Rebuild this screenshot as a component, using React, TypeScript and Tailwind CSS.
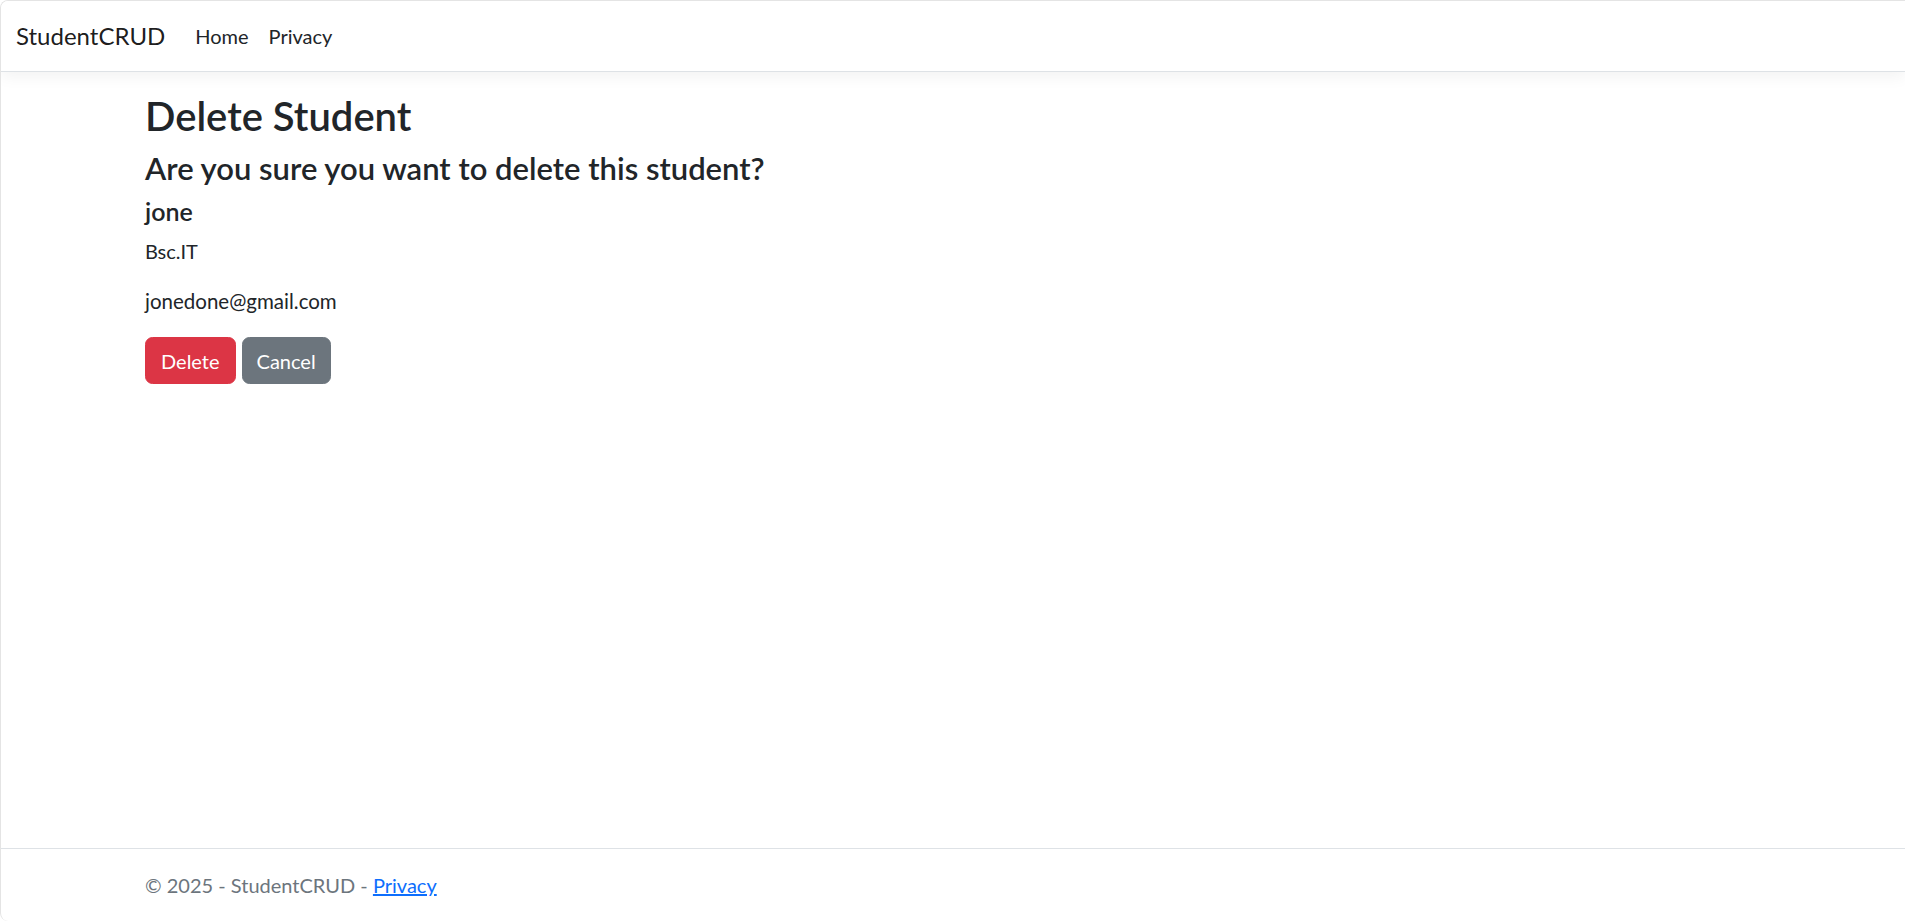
import React from "react";

function NavBar() {
  return (
    <header>
      <nav className="h-[71px] flex items-center px-[15px] bg-white border-b border-[#dee2e6] shadow-[0_5px_15px_rgba(0,0,0,0.05)]">
        <a href="#" className="text-[24px] leading-[37.5px] py-[6.25px] mr-[20px] text-black/90 no-underline">
          StudentCRUD
        </a>
        <ul className="flex">
          <li>
            <a href="#" className="block px-[10px] py-[10px] text-[#212529]">
              Home
            </a>
          </li>
          <li>
            <a href="#" className="block px-[10px] py-[10px] text-[#212529]">
              Privacy
            </a>
          </li>
        </ul>
      </nav>
    </header>
  );
}

function DeleteStudent() {
  return (
    <main className="pt-[20px]">
      <h2 className="text-[40px] leading-[48px] font-semibold mb-[10px]">Delete Student</h2>
      <h4 className="text-[31px] leading-[36px] font-semibold mb-[10px]">
        Are you sure you want to delete this student?
      </h4>
      <h5 className="text-[25px] leading-[30px] font-semibold mb-[10px]">jone</h5>
      <p className="mb-[20px]">Bsc.IT</p>
      <p className="mb-[20px] text-[20.5px]">jonedone@gmail.com</p>
      <form className="flex gap-[6px] pt-[1px]" onSubmit={(e) => e.preventDefault()}>
        <button
          type="submit"
          className="h-[47px] px-[15px] rounded-[7.5px] border border-[#dc3545] bg-[#dc3545] text-white leading-[30px]"
        >
          Delete
        </button>
        <a
          href="#"
          className="h-[47px] flex items-center px-[14px] rounded-[7.5px] border border-[#6c757d] bg-[#6c757d] text-white leading-[30px]"
        >
          Cancel
        </a>
      </form>
    </main>
  );
}

export default function App() {
  return (
    <div className="h-[921px] flex flex-col overflow-hidden bg-white text-[20px] leading-[30px] text-[#212529] font-['Lato',sans-serif] border-l border-t border-[#e4e4e4] rounded-tl-[8px] rounded-bl-[8px]">
      <NavBar />
      <div className="w-[1650px] mx-auto px-[17px] flex-1">
        <DeleteStudent />
      </div>
      <footer className="h-[73px] border-t border-[#dee2e6] text-[#6c757d] leading-[72px] whitespace-nowrap">
        <div className="w-[1650px] mx-auto px-[17px]">
          © 2025 - StudentCRUD -{" "}
          <a href="#" className="text-[#0d6efd] underline">
            Privacy
          </a>
        </div>
      </footer>
    </div>
  );
}
